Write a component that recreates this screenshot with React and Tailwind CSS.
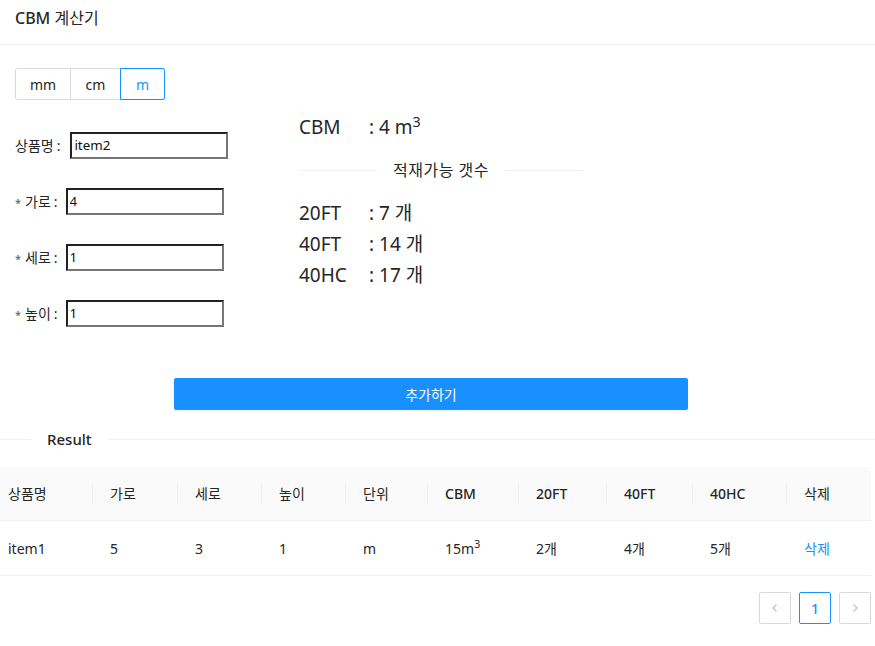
import React, { useState } from "react";

const UNITS = ["mm", "cm", "m"];

const COLS = [
  { key: "name", label: "상품명", w: 93, first: true },
  { key: "w", label: "가로", w: 85 },
  { key: "d", label: "세로", w: 84 },
  { key: "h", label: "높이", w: 84 },
  { key: "unit", label: "단위", w: 82 },
  { key: "cbm", label: "CBM", w: 91, latin: true },
  { key: "ft20", label: "20FT", w: 88, latin: true },
  { key: "ft40", label: "40FT", w: 86, latin: true },
  { key: "hc40", label: "40HC", w: 94, latin: true },
  { key: "del", label: "삭제", w: 84, last: true },
];

const rows = [
  { name: "item1", w: "5", d: "3", h: "1", unit: "m", cbm: 15, ft20: 2, ft40: 4, hc40: 5 },
];

const Field = ({ label, required, value, inputClass }) => (
  <div className="h-[56px] flex items-center">
    <label className="text-[14px] text-[#262626] whitespace-nowrap">
      {required && <span className="text-[11px] mr-[4px] text-[#555]">*</span>}
      {label}
      <span className="ml-[3px]">:</span>
    </label>
    <input
      readOnly
      value={value}
      className={`h-[27px] border-2 border-t-[#222] border-l-[#222] border-b-[#767676] border-r-[#767676] px-[2px] text-[13.33px] text-[#111] outline-none ${inputClass}`}
    />
  </div>
);

export default function App() {
  const [unit, setUnit] = useState("m");

  return (
    <div className="w-[875px] min-h-[646px] bg-white text-[#262626] font-['Noto_Sans','Noto_Sans_CJK_KR',sans-serif]">
      {/* header */}
      <div className="h-[45px] border-b border-[#f0f0f0] px-[15px] pt-[6px]">
        <span className="text-[16px] leading-[22px]">
          <span className="font-medium">CBM</span> 계산기
        </span>
      </div>

      <div className="pl-[15px]">
        {/* unit radio */}
        <div className="mt-[23px] flex h-[32px] w-fit">
          {UNITS.map((u, i) => {
            const active = unit === u;
            return (
              <button
                key={u}
                onClick={() => setUnit(u)}
                className={`h-[32px] text-[14px] border ${
                  i === 0 ? "w-[56px] rounded-l-[2px]" : i === 1 ? "w-[51px] -ml-px" : "w-[45px] -ml-px rounded-r-[2px]"
                } ${active ? "border-[#1890ff] text-[#1890ff] relative z-10" : "border-[#d9d9d9] text-[#262626]"}`}
              >
                {u}
              </button>
            );
          })}
        </div>

        {/* form + results */}
        <div className="mt-[17px] flex">
          <div className="w-[284px]">
            <Field label="상품명" value="item2" inputClass="ml-[10px] w-[158px]" />
            <Field label="가로" required value="4" inputClass="ml-[8px] w-[158px]" />
            <Field label="세로" required value="1" inputClass="ml-[8px] w-[158px]" />
            <Field label="높이" required value="1" inputClass="ml-[8px] w-[158px]" />
          </div>

          <div className="w-[284px]">
            <div className="flex h-[20px] items-center text-[19px]">
              <span className="w-[70px]">CBM</span>
              <span>
                : 4 m<sup>3</sup>
              </span>
            </div>
            <div className="mt-[21px] flex h-[24px] items-center">
              <div className="flex-1 h-px bg-[#f0f0f0]" />
              <span className="px-[16px] text-[16px] tracking-[0.5px]">적재가능 갯수</span>
              <div className="flex-1 h-px bg-[#f0f0f0]" />
            </div>
            <div className="mt-[16px] text-[19px]">
              {[
                ["20FT", "7"],
                ["40FT", "14"],
                ["40HC", "17"],
              ].map(([k, v]) => (
                <div key={k} className="flex h-[31px] items-center">
                  <span className="w-[70px]">{k}</span>
                  <span>: {v} 개</span>
                </div>
              ))}
            </div>
          </div>
        </div>
      </div>

      {/* add button */}
      <div className="mt-[37px] pl-[174px]">
        <button className="h-[32px] w-[514px] rounded-[2px] bg-[#1890ff] text-white text-[14px] shadow-[0_2px_0_rgba(0,0,0,0.045)]">
          추가하기
        </button>
      </div>

      {/* result divider */}
      <div className="mt-[18px] flex h-[22px] items-center">
        <div className="w-[31px] h-px bg-[#f0f0f0]" />
        <span className="px-[16px] text-[15px] font-medium">Result</span>
        <div className="flex-1 h-px bg-[#f0f0f0]" />
      </div>

      {/* table */}
      <div className="mt-[17px] w-[871px]">
        <div className="flex h-[54px] bg-[#fafafa] border-b border-[#f0f0f0]">
          {COLS.map((c, i) => (
            <div
              key={c.key}
              style={{ width: c.w }}
              className={`relative flex items-center text-[14px] ${c.first ? "pl-[8px]" : "pl-[17px]"} ${
                c.latin ? "font-medium" : ""
              }`}
            >
              {c.label}
              {i < COLS.length - 1 && (
                <span className="absolute right-0 top-1/2 -translate-y-1/2 h-[22px] w-px bg-[#f0f0f0]" />
              )}
            </div>
          ))}
        </div>
        {rows.map((r) => (
          <div key={r.name} className="flex h-[55px] border-b border-[#f0f0f0] text-[14px]">
            {COLS.map((c) => (
              <div
                key={c.key}
                style={{ width: c.w }}
                className={`flex items-center ${c.first ? "pl-[8px]" : "pl-[17px]"}`}
              >
                {c.key === "del" ? (
                  <span className="text-[#1890ff] cursor-pointer">삭제</span>
                ) : c.key === "cbm" ? (
                  <span>
                    {r.cbm}m<sup>3</sup>
                  </span>
                ) : ["ft20", "ft40", "hc40"].includes(c.key) ? (
                  `${r[c.key]}개`
                ) : (
                  r[c.key]
                )}
              </div>
            ))}
          </div>
        ))}
      </div>

      {/* pagination */}
      <div className="mt-[16px] w-[871px] flex justify-end gap-[8px]">
        <button className="w-[32px] h-[32px] border border-[#d9d9d9] rounded-[2px] flex items-center justify-center text-[#bfbfbf]">
          <svg width="10" height="10" viewBox="0 0 10 10" fill="none" stroke="currentColor" strokeWidth="1.2">
            <path d="M6.5 1.5 3 5l3.5 3.5" />
          </svg>
        </button>
        <button className="w-[32px] h-[32px] border border-[#1890ff] rounded-[2px] text-[#1890ff] text-[14px] font-medium">
          1
        </button>
        <button className="w-[32px] h-[32px] border border-[#d9d9d9] rounded-[2px] flex items-center justify-center text-[#bfbfbf]">
          <svg width="10" height="10" viewBox="0 0 10 10" fill="none" stroke="currentColor" strokeWidth="1.2">
            <path d="M3.5 1.5 7 5 3.5 8.5" />
          </svg>
        </button>
      </div>
    </div>
  );
}
